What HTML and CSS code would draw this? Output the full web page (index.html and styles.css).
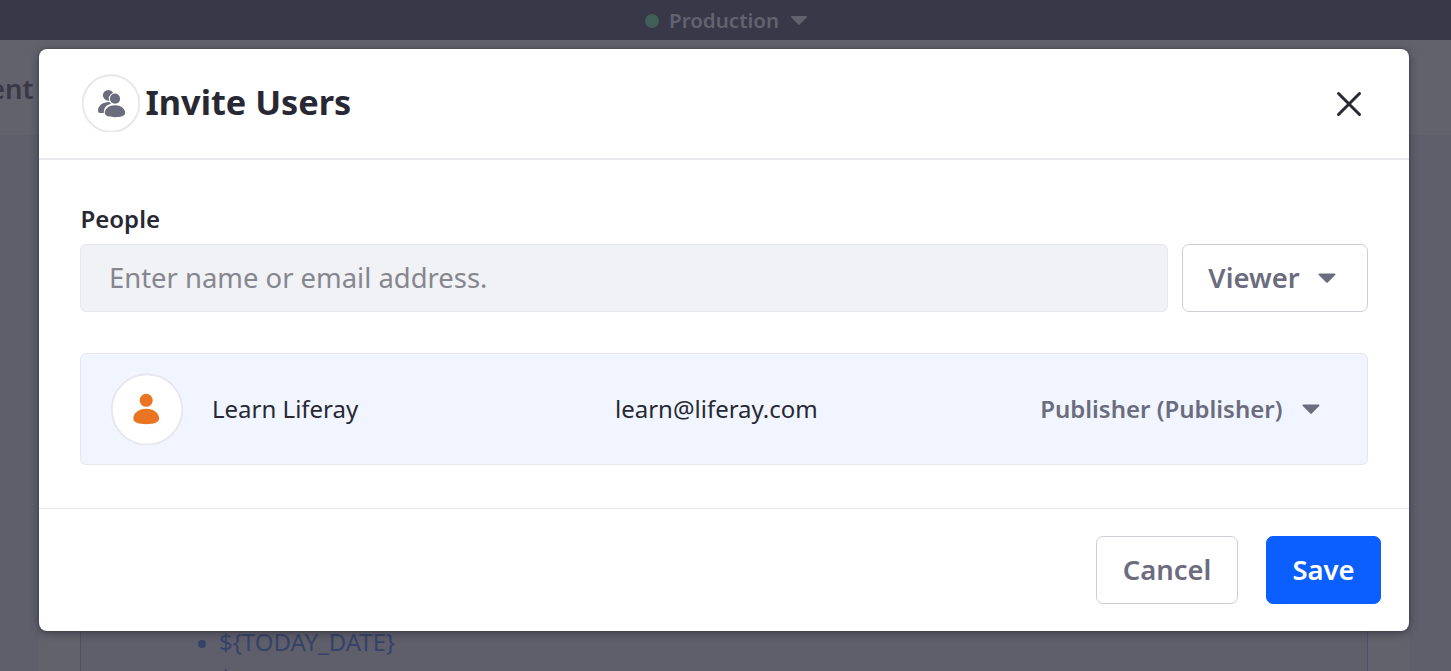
FILE: index.html
```html
<!DOCTYPE html>
<html lang="en">
<head>
<meta charset="utf-8">
<title>Invite Users</title>
<link rel="stylesheet" href="styles.css">
</head>
<body>
<div class="page">
  <div class="topbar">
    <span class="dot"></span>
    <span class="topbar-label">Production</span>
    <svg class="topbar-caret" viewBox="0 0 18 11"><path d="M2 1h14c1 0 1.300.8.7 1.400L10 9.300q-1 1-2 0L1.300 2.400C.7 1.800 1 1 2 1z"/></svg>
  </div>
  <div class="page-head"><span>ent</span></div>
  <div class="page-main">
    <div class="sheet">
      <div class="editor">
        <ul class="terms"><li>${TODAY_DATE}</li><li>$</li></ul>
      </div>
    </div>
  </div>
</div>

<section class="modal" role="dialog" aria-labelledby="title">
  <header class="modal-header">
    <svg class="group-icon" viewBox="0 0 58 58">
      <circle cx="29" cy="29.500" r="28.300" fill="#fff" stroke="#e7e7ed" stroke-width="1.900"/>
      <g fill="#6b6c7e">
        <circle cx="26.300" cy="21.300" r="5.400"/>
        <path d="M16 36.500C16 32 20.500 28 27 28L31 30L23 39H18Q16 39 16 36.500z"/>
        <circle cx="33" cy="24.800" r="6.200" fill="#fff"/>
        <path d="M21.800 38c0-5 4-8.800 11.200-8.800s11.400 3.800 11.400 8.800L40 43H22z" fill="#fff"/>
        <circle cx="33" cy="24.700" r="5.100"/>
        <path d="M33 31.200c6 0 10.200 3.500 10.200 7.600 0 3.200-4 4.400-10.200 4.400s-10.200-1.200-10.200-4.400c0-4.100 4.200-7.600 10.200-7.600z"/>
      </g>
    </svg>
    <h1 id="title">Invite Users</h1>
    <button class="close" aria-label="Close">
      <svg viewBox="0 0 26 26"><path d="M2.500 2.500l21 21M23.500 2.500l-21 21"/></svg>
    </button>
  </header>
  <div class="modal-body">
    <label for="people">People</label>
    <div class="search-row">
      <input id="people" type="text" placeholder="Enter name or email address.">
      <button class="btn viewer"><span>Viewer</span><svg class="caret" viewBox="0 0 18 11"><path d="M1.500.5h15c1 0 1.300.8.7 1.400L10 9.200q-1 1-2 0L.8 1.900C.2 1.300.5.500 1.500.5z"/></svg></button>
    </div>
    <div class="user">
      <svg class="avatar" viewBox="0 0 72 72">
        <circle cx="36" cy="36.500" r="35.200" fill="#fff" stroke="#e7e7ed" stroke-width="1.900"/>
        <circle cx="35.200" cy="27.300" r="6.500" fill="#e97523"/>
        <path d="M35.200 35.800c7.800 0 12.900 4.500 12.900 9.800 0 4.100-5.100 5.600-12.900 5.600s-12.900-1.500-12.900-5.600c0-5.300 5.100-9.800 12.900-9.800z" fill="#e97523"/>
      </svg>
      <span class="name">Learn Liferay</span>
      <span class="email">learn@liferay.com</span>
      <span class="role"><span class="role-label">Publisher (Publisher)</span><svg class="caret" viewBox="0 0 18 11"><path d="M1.500.5h15c1 0 1.300.8.7 1.400L10 9.200q-1 1-2 0L.8 1.900C.2 1.300.5.500 1.500.5z"/></svg></span>
    </div>
  </div>
  <footer class="modal-footer">
    <button class="btn cancel"><span>Cancel</span></button>
    <button class="btn save"><span>Save</span></button>
  </footer>
</section>
</body>
</html>
```
FILE: styles.css
```css
* { box-sizing: border-box; }
body {
  margin: 0;
  width: 1451px;
  height: 671px;
  overflow: hidden;
  position: relative;
  font-family: "Noto Sans", "Open Sans", sans-serif;
  color: #272833;
}
svg { display: block; flex: none; }

.page { height: 671px; display: flex; flex-direction: column; overflow: hidden; background: #5f5e6b; }
.topbar { flex: none; height: 40px; display: flex; align-items: center; padding-left: 645px; background: #393848; color: #62626f; }
.dot { width: 14px; height: 14px; margin-top: 1px; border-radius: 50%; background: #425e58; }
.topbar-label { margin-left: 10px; font-size: 20.570px; font-weight: 600; line-height: 40px; width: 112px; white-space: nowrap; }
.topbar-caret { margin-left: 9px; width: 18px; height: 11px; fill: #62626f; }
.page-head { flex: none; height: 95px; background: #62626d; display: flex; align-items: center; }
.page-head span { margin-left: -11px; padding-top: 3px; font-size: 27.400px; font-weight: 600; line-height: 40px; color: #393848; }
.page-main { flex: 1; display: flex; min-height: 0; padding: 0 42px 0 39px; }
.sheet { flex: 1; display: flex; background: #62626d; padding: 0 41px; }
.editor { flex: 1; background: #5f5e6b; border: solid #4a4f70; border-width: 0 1px; padding: 489px 0 0 138px; }
.terms { margin: 0; padding: 0; list-style: none; font-size: 24px; line-height: 36px; color: #354368; }
.terms li { display: flex; align-items: center; }
.terms li::before { content: ""; width: 8px; height: 8px; border-radius: 50%; background: #354368; margin: 4px 13px 0 -21px; }

.modal {
  position: absolute;
  left: 39px;
  top: 49px;
  width: 1370px;
  height: 582px;
  display: flex;
  flex-direction: column;
  background: #fff;
  border-radius: 8px;
  box-shadow: 0 2px 8px rgba(39, 40, 51, .6), 0 0 2px rgba(39, 40, 51, .5);
}
.modal-header { height: 111px; display: flex; align-items: center; padding: 0 47px 2px 43px; border-bottom: 2px solid #e9e9ef; }
.group-icon { width: 58px; height: 58px; }
h1 { margin: 0 auto 0 5.500px; padding-bottom: 2px; font-size: 34.290px; font-weight: 700; line-height: 48px; }
.close { border: 0; background: none; padding: 0; margin-top: 2px; width: 26px; height: 26px; }
.close svg { width: 26px; height: 26px; fill: none; stroke: #272833; stroke-width: 3; stroke-linecap: round; }
.modal-body { flex: 1; padding: 41px 41px 0; }
label { display: block; height: 43px; padding-left: .5px; font-size: 24px; font-weight: 600; line-height: 36px; }
.search-row { display: flex; gap: 14px; }
input {
  flex: 1;
  min-width: 0;
  height: 68px;
  padding: 0 28px 2px;
  border: 1px solid #e7e7ed;
  border-radius: 6px;
  background: #f1f2f5;
  font: 400 27.430px "Noto Sans", "Open Sans", sans-serif;
}
input::placeholder { color: #85868f; opacity: 1; }
.btn {
  height: 68px;
  display: flex;
  align-items: center;
  justify-content: center;
  padding: 0;
  border: 1px solid #cdced9;
  border-radius: 7px;
  background: #fff;
  color: #6b6c7e;
  font: 600 27.430px "Noto Sans", "Open Sans", sans-serif;
}
.btn span { padding-bottom: 2px; }
.viewer { width: 186px; gap: 18px; padding-right: 6px; }
.caret { width: 18px; height: 11px; fill: #6b6c7e; }
.user { margin-top: 41px; height: 112px; display: flex; align-items: center; padding: 0 47px 0 30px; border: 1px solid #e7e7ed; border-radius: 6px; background: #f0f5ff; font-size: 24px; }
.avatar { width: 72px; height: 72px; }
.name { margin-left: 29px; width: 403px; }
.name, .email, .role-label { padding-bottom: 2px; }
.role { margin-left: auto; display: flex; align-items: center; gap: 19.500px; color: #6b6c7e; font-weight: 600; }
.modal-footer { height: 123px; display: flex; align-items: center; justify-content: flex-end; gap: 28px; padding: 0 28px 0 0; border-top: 1px solid #e7e7ed; }
.cancel { width: 142px; }
.save { width: 115px; border-color: #0b5fff; background: #0b5fff; color: #fff; }
```
